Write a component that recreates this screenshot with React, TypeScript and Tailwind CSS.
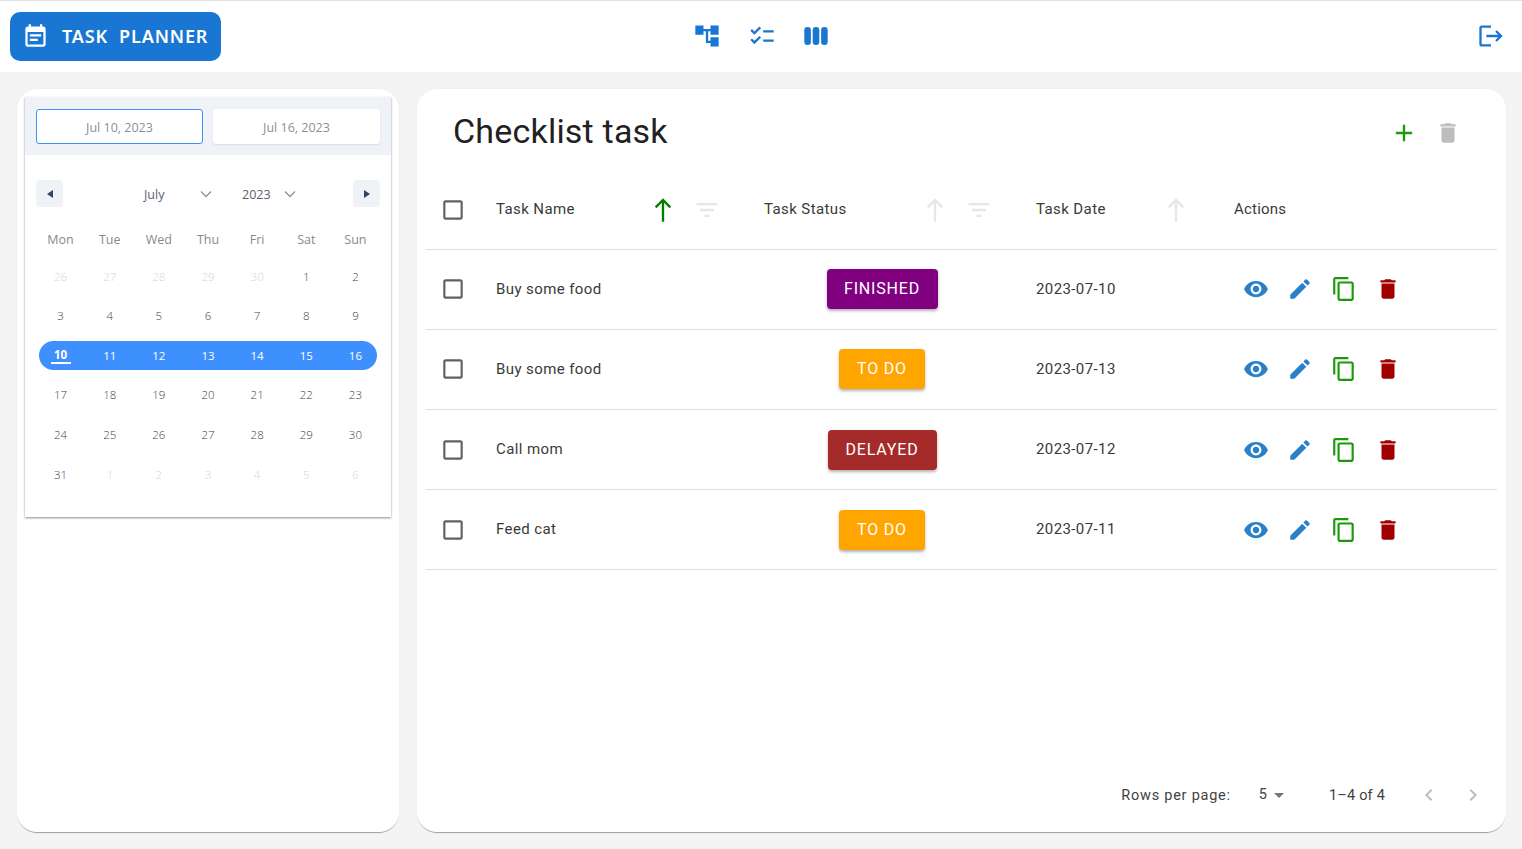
import React from "react";

const paths = {
  note: "M17 10H7v2h10v-2zm2-7h-1V1h-2v2H8V1H6v2H5c-1.11 0-1.99.9-1.99 2L3 19c0 1.1.89 2 2 2h14c1.1 0 2-.9 2-2V5c0-1.1-.9-2-2-2zm0 16H5V8h14v11zm-5-5H7v2h7v-2z",
  tree: "M22 11V3h-7v3H9V3H2v8h7V8h2v10h4v3h7v-8h-7v3h-2V8h2v3z",
  checklist:
    "M22 7h-9v2h9V7zm0 8h-9v2h9v-2zM5.54 11 2 7.46l1.41-1.41 2.12 2.12 4.24-4.24 1.41 1.41L5.54 11zm0 8L2 15.46l1.41-1.41 2.12 2.12 4.24-4.24 1.41 1.41L5.54 19z",
  logout:
    "M17 7l-1.41 1.41L18.17 11H8v2h10.17l-2.58 2.58L17 17l5-5zM4 5h8V3H4c-1.1 0-2 .9-2 2v14c0 1.1.9 2 2 2h8v-2H4V5z",
  eye: "M12 4.5C7 4.5 2.73 7.61 1 12c1.73 4.39 6 7.5 11 7.5s9.27-3.11 11-7.5c-1.73-4.39-6-7.5-11-7.5zM12 17c-2.76 0-5-2.24-5-5s2.24-5 5-5 5 2.24 5 5-2.24 5-5 5zm0-8c-1.66 0-3 1.34-3 3s1.34 3 3 3 3-1.34 3-3-1.34-3-3-3z",
  edit: "M3 17.25V21h3.75L17.81 9.94l-3.75-3.75L3 17.25zM20.71 7.04c.39-.39.39-1.02 0-1.41l-2.34-2.34a.9959.9959 0 0 0-1.41 0l-1.83 1.83 3.75 3.75 1.83-1.83z",
  copy: "M16 1H4c-1.1 0-2 .9-2 2v14h2V3h12V1zm3 4H8c-1.1 0-2 .9-2 2v14c0 1.1.9 2 2 2h11c1.1 0 2-.9 2-2V7c0-1.1-.9-2-2-2zm0 16H8V7h11v14z",
  trash: "M6 19c0 1.1.9 2 2 2h8c1.1 0 2-.9 2-2V7H6v12zM19 4h-3.5l-1-1h-5l-1 1H5v2h14V4z",
  add: "M19 13h-6v6h-2v-6H5v-2h6V5h2v6h6v2z",
  north: "M5 9l1.41 1.41L11 5.83V22h2V5.83l4.59 4.59L19 9l-7-7-7 7z",
  filter: "M10 18h4v-2h-4v2zM3 6v2h18V6H3zm3 7h12v-2H6v2z",
  box: "M19 5v14H5V5h14m0-2H5c-1.1 0-2 .9-2 2v14c0 1.1.9 2 2 2h14c1.1 0 2-.9 2-2V5c0-1.1-.9-2-2-2z",
  drop: "M7 10l5 5 5-5z",
  left: "M15.41 16.59L10.83 12l4.58-4.59L14 6l-6 6 6 6 1.41-1.41z",
  right: "M8.59 16.59L13.17 12 8.59 7.41 10 6l6 6-6 6-1.41-1.41z",
};

function Icon({ d, className }: { d: string; className: string }) {
  return (
    <svg viewBox="0 0 24 24" fill="currentColor" className={className}>
      <path d={d} />
    </svg>
  );
}

function Chevron({ className }: { className: string }) {
  return (
    <svg viewBox="0 0 12 8" className={`w-[12px] h-[8px] text-[#8d9399] ${className}`} fill="none" stroke="currentColor" strokeWidth="1.3">
      <path d="M1 1.5l5 5 5-5" />
    </svg>
  );
}

const tasks = [
  { name: "Buy some food", status: "FINISHED", date: "2023-07-10", color: "bg-[#800080]", w: "w-[111px]" },
  { name: "Buy some food", status: "TO DO", date: "2023-07-13", color: "bg-[#ffa500]", w: "w-[86px]" },
  { name: "Call mom", status: "DELAYED", date: "2023-07-12", color: "bg-[#a52a2a]", w: "w-[109px]" },
  { name: "Feed cat", status: "TO DO", date: "2023-07-11", color: "bg-[#ffa500]", w: "w-[86px]" },
];

const weeks = [
  ["26", "27", "28", "29", "30", "1", "2"],
  ["3", "4", "5", "6", "7", "8", "9"],
  ["10", "11", "12", "13", "14", "15", "16"],
  ["17", "18", "19", "20", "21", "22", "23"],
  ["24", "25", "26", "27", "28", "29", "30"],
  ["31", "1", "2", "3", "4", "5", "6"],
];

function Calendar() {
  return (
    <div className="bg-white shadow-[0_1px_2px_rgba(0,0,0,0.45)] font-['Open_Sans',sans-serif] pb-[23px]">
      <div className="bg-[#eff2f7] h-[58px] px-[11px] flex items-center gap-[10px] text-[12.5px] text-[#8a9099]">
        <div className="w-[167px] h-[35px] bg-white rounded-[3px] border border-[#3e90ff] flex items-center justify-center pt-[4px]">
          Jul 10, 2023
        </div>
        <div className="w-[167px] h-[35px] bg-white rounded-[3px] shadow-[0_1px_2px_rgba(0,0,0,0.1)] flex items-center justify-center pt-[4px]">
          Jul 16, 2023
        </div>
      </div>
      <div className="h-[27px] mt-[25px] px-[11px] flex items-center text-[12.5px] text-[#5a6270]">
        <div className="w-[27px] h-[27px] rounded-[4px] bg-[#eff2f7] flex items-center justify-center">
          <div className="w-0 h-0 border-y-[4px] border-y-transparent border-r-[6px] border-r-[#344563]" />
        </div>
        <span className="ml-[81px] w-[22px] pt-[4px]">July</span>
        <Chevron className="ml-[34px]" />
        <span className="ml-[30px] pt-[4px]">2023</span>
        <Chevron className="ml-[13px]" />
        <div className="ml-auto w-[27px] h-[27px] rounded-[4px] bg-[#eff2f7] flex items-center justify-center">
          <div className="w-0 h-0 border-y-[4px] border-y-transparent border-l-[6px] border-l-[#344563]" />
        </div>
      </div>
      <div className="mt-[18px] px-[11px] grid grid-cols-7 h-[30px] items-center text-center text-[12.5px] text-[#858b91]">
        {["Mon", "Tue", "Wed", "Thu", "Fri", "Sat", "Sun"].map((d) => (
          <div key={d}>{d}</div>
        ))}
      </div>
      <div className="px-[11px] mt-[1.5px] text-[11.5px] font-light">
        {weeks.map((week, i) => (
          <div key={i} className="relative grid grid-cols-7 h-[39.6px] items-center text-center">
            {i === 2 && <div className="absolute inset-x-[3px] top-[5px] h-[29px] rounded-full bg-[#3e90ff]" />}
            {week.map((day, j) => {
              const muted = (i === 0 && j < 5) || (i === 5 && j > 0);
              let color = "text-[#3f3f3f]";
              if (muted) color = "text-[#cfd6dc]";
              if (i === 2) color = "text-white font-normal";
              return (
                <div key={j} className={`relative ${color}`}>
                  {i === 2 && j === 0 ? (
                    <span className="inline-block w-[20px] font-bold border-b-2 border-white leading-[14px]">{day}</span>
                  ) : (
                    day
                  )}
                </div>
              );
            })}
          </div>
        ))}
      </div>
    </div>
  );
}

const rowGrid = "grid grid-cols-[54px_268px_272px_198px_279px] items-center h-[80px] border-b border-[#e0e0e0]";

function HeaderCell({ label, active }: { label: string; active?: boolean }) {
  return (
    <div className="pl-4 flex items-center">
      <span>{label}</span>
      <Icon d={paths.north} className={`w-7 h-7 ml-auto ${active ? "text-[#008000]" : "text-[#e6e6e6]"}`} />
      <Icon d={paths.filter} className="w-7 h-7 ml-4 mr-[27px] text-[#e6e6e6]" />
    </div>
  );
}

export default function App() {
  return (
    <div className="h-[849px] w-[1522px] flex flex-col bg-[#f4f4f4] font-['Roboto',sans-serif] overflow-hidden">
      <header className="h-[72px] bg-white border-t border-[#e0e0e0] px-[10px] flex items-center">
        <div className="w-[211px] h-[49px] -mt-[1px] rounded-[10px] bg-[#1976d2] text-white flex items-center pl-[12px]">
          <Icon d={paths.note} className="w-[27px] h-[27px]" />
          <span className="ml-[13px] font-['Noto_Sans',sans-serif] font-semibold text-[18px] tracking-[0.85px] whitespace-pre">TASK  PLANNER</span>
        </div>
        <div className="ml-[472px] -mt-[1px] flex items-center gap-[26.5px] text-[#1976d2]">
          <Icon d={paths.tree} className="w-[28px] h-[28px]" />
          <Icon d={paths.checklist} className="w-[28px] h-[28px]" />
          <svg viewBox="0 0 28 28" fill="currentColor" className="w-[28px] h-[28px]">
            <rect x="2.3" y="5" width="6.6" height="18" rx="3.2" />
            <rect x="10.7" y="5" width="6.6" height="18" rx="3.2" />
            <rect x="19.1" y="5" width="6.6" height="18" rx="3.2" />
          </svg>
        </div>
        <Icon d={paths.logout} className="w-[28px] h-[28px] ml-auto mr-[7px] -mt-[1px] text-[#1976d2]" />
      </header>

      <main className="flex-1 flex gap-[18px] px-[17px] py-[17px]">
        <section className="w-[382px] bg-white rounded-[20px] shadow-[0_2px_1px_-1px_rgba(0,0,0,0.35),0_0_2px_rgba(0,0,0,0.06)] p-2">
          <Calendar />
        </section>

        <section className="flex-1 bg-white rounded-[20px] shadow-[0_2px_1px_-1px_rgba(0,0,0,0.35),0_0_2px_rgba(0,0,0,0.06)] flex flex-col">
          <div className="h-[81px] flex items-center pl-[36px] pr-[45px]">
            <h1 className="text-[34px] tracking-[0.2px] text-[#212121] leading-none mt-[3px]">Checklist task</h1>
            <Icon d={paths.add} className="w-7 h-7 ml-auto mt-[6px] text-[#1a9a0a]" />
            <Icon d={paths.trash} className="w-[26px] h-[26px] ml-[17px] mt-[6px] text-[#bdbdbd]" />
          </div>
          <div className="mx-[9px] text-[15px] tracking-[0.4px] text-[#3a3a3a]">
            <div className={rowGrid}>
              <Icon d={paths.box} className="w-[26px] h-[26px] ml-[14px] text-[#616161]" />
              <HeaderCell label="Task Name" active />
              <HeaderCell label="Task Status" />
              <div className="pl-4 flex items-center">
                <span>Task Date</span>
                <Icon d={paths.north} className="w-7 h-7 ml-auto mr-[28px] text-[#e6e6e6]" />
              </div>
              <div className="pl-4 tracking-[0.2px]">Actions</div>
            </div>
            {tasks.map((t, i) => (
              <div key={i} className={`${rowGrid} ${i < 2 ? "pb-[1px]" : ""}`}>
                <Icon d={paths.box} className="w-[26px] h-[26px] ml-[14px] text-[#616161]" />
                <div className="pl-4">{t.name}</div>
                <div className="flex justify-center pr-[4px]">
                  <div className={`${t.color} ${t.w} h-[40px] rounded-[4px] text-white text-[16px] tracking-[0.8px] flex items-center justify-center shadow-[0_2px_3px_rgba(0,0,0,0.3)]`}>
                    {t.status}
                  </div>
                </div>
                <div className="pl-4">{t.date}</div>
                <div className="pl-[25px] flex items-center gap-[18px]">
                  <Icon d={paths.eye} className="w-[26px] h-[26px] text-[#2a7fc9]" />
                  <Icon d={paths.edit} className="w-[26px] h-[26px] text-[#2a7fc9]" />
                  <Icon d={paths.copy} className="w-[26px] h-[26px] text-[#1a9a0a]" />
                  <Icon d={paths.trash} className="w-[26px] h-[26px] text-[#a00000]" />
                </div>
              </div>
            ))}
          </div>
          <div className="mt-auto h-[74px] flex items-center justify-end pr-[21px] text-[14.5px] text-[#424242]">
            <span className="tracking-[0.75px] pt-[1px]">Rows per page:</span>
            <span className="ml-[28px] pb-[1px]">5</span>
            <Icon d={paths.drop} className="w-6 h-6 text-[#757575]" />
            <span className="ml-[38px] tracking-[0.2px] pt-[1px]">1–4 of 4</span>
            <Icon d={paths.left} className="w-6 h-6 ml-8 text-[#bdbdbd]" />
            <Icon d={paths.right} className="w-6 h-6 ml-5 text-[#bdbdbd]" />
          </div>
        </section>
      </main>
    </div>
  );
}
